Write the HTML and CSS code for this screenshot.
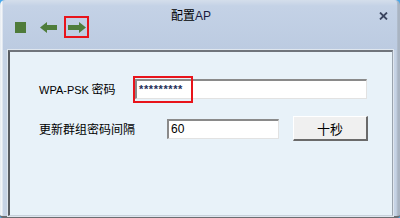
FILE: index.html
```html
<!DOCTYPE html>
<html>
<head>
<meta charset="utf-8">
<link rel="stylesheet" href="styles.css">
</head>
<body>
<div class="window">
  <div class="titlebar">
    <div class="tools">
      <span class="stop"></span>
      <svg class="arrow" width="17" height="11" viewBox="0 0 17 11"><path d="M0 5.5 L7 0 L7 3 L17 3 L17 8 L7 8 L7 11 Z" fill="#4f7d3b"/></svg>
      <span class="hl">
        <svg class="arrow" width="18" height="11" viewBox="0 0 18 11"><path d="M18 5.5 L11 0 L11 3 L0 3 L0 8 L11 8 L11 11 Z" fill="#4f7d3b"/></svg>
      </span>
    </div>
    <div class="title">配置<span class="lat">AP</span></div>
    <svg class="close" width="9" height="8" viewBox="0 0 9 8"><path d="M1 0.5 L8 7.5 M8 0.5 L1 7.5" stroke="#3b4560" stroke-width="1.8"/></svg>
  </div>
  <div class="panel">
    <div class="row row1">
      <span class="label l1"><span class="lat">WPA-PSK</span> 密码</span>
      <span class="field f1">*********<span class="mark"></span></span>
    </div>
    <div class="row row2">
      <span class="label l2">更新群组密码间隔</span>
      <span class="field f2">60</span>
      <span class="btn">十秒</span>
    </div>
  </div>
</div>
</body>
</html>
```

FILE: styles.css
```css
html, body {
  margin: 0;
  padding: 0;
  background: #4aa8ea;
}
body {
  width: 400px;
  height: 218px;
  overflow: hidden;
  font-family: "Noto Sans CJK SC", "Liberation Sans", sans-serif;
  font-size: 12px;
  color: #000;
}
.window {
  width: 400px;
  height: 218px;
  box-sizing: border-box;
  border-radius: 5px 5px 3px 3px;
  background: linear-gradient(to right, #e6ebf1 0, #f7f9fb 2px, #c6d3e5 3px, #c6d3e5 396px, #a9b4c2 398px);
  border-bottom: 2px solid #6b6e72;
  display: flex;
  flex-direction: column;
}
.titlebar {
  height: 50px;
  display: flex;
  align-items: flex-start;
  padding-left: 15px;
  background: linear-gradient(to bottom, #d4deeb 0, #c4d2e6 6px, #bccbe1 50px);
  margin: 0 3px 0 3px;
  padding-left: 12px;
  border-radius: 4px 4px 0 0;
}
.tools {
  display: flex;
  align-items: center;
  margin-top: 16px;
  height: 22px;
}
.stop {
  width: 11px;
  height: 11px;
  background: #4f7b3a;
}
.tools .arrow {
  display: block;
}
.tools > .arrow {
  margin-left: 14px;
}
.hl {
  margin-left: 7px;
  width: 21px;
  height: 18px;
  border: 2px solid #e8141b;
  display: flex;
  align-items: center;
  justify-content: center;
}
.title {
  margin-left: 82px;
  margin-top: 7px;
  line-height: 16px;
  font-size: 12px;
}
.title .lat {
  font-family: "Liberation Sans", sans-serif;
  font-size: 12px;
  color: #1a1a40;
}
.close {
  margin-left: auto;
  margin-right: 9px;
  margin-top: 12px;
}
.panel {
  flex: 1;
  margin: 0 7px 0 8px;
  background: #e8f2f9;
  border-top: 2px solid #70757c;
  border-left: 2px solid #585c62;
  border-right: 1px solid #9aa3ad;
  border-bottom: 1px solid #c8d2dc;
  box-shadow: 0 0 0 1px #dfe6ee;
  padding: 27px 0 0 29px;
  display: flex;
  flex-direction: column;
  gap: 17px;
}
.row {
  display: flex;
  align-items: center;
}
.label {
  line-height: 16px;
}
.label .lat {
  font-family: "Liberation Sans", sans-serif;
  font-size: 11px;
}
.l1 { width: 96px; }
.l2 { width: 128px; }
.field {
  position: relative;
  height: 20px;
  box-sizing: border-box;
  background: #fff;
  border-style: solid;
  border-width: 2px 1px 1px 2px;
  border-color: #8a8a8a #e2e2e2 #e2e2e2 #8a8a8a;
  font-family: "Liberation Sans", sans-serif;
  font-size: 12px;
  line-height: 17px;
  padding-left: 2px;
}
.f1 {
  width: 232px;
  color: #1e2f5a;
  letter-spacing: 0.6px;
  font-weight: bold;
  font-size: 11px;
}
.mark {
  position: absolute;
  left: -4px;
  top: -5px;
  width: 56px;
  height: 23px;
  border: 2px solid #e8141b;
}
.f2 {
  width: 112px;
}
.btn {
  margin-left: 14px;
  width: 75px;
  height: 25px;
  box-sizing: border-box;
  background: #f0f0f0;
  border-style: solid;
  border-width: 1px 2px 2px 1px;
  border-color: #ffffff #6a6a6a #6a6a6a #ffffff;
  display: flex;
  align-items: center;
  justify-content: center;
  font-size: 13px;
}
```
